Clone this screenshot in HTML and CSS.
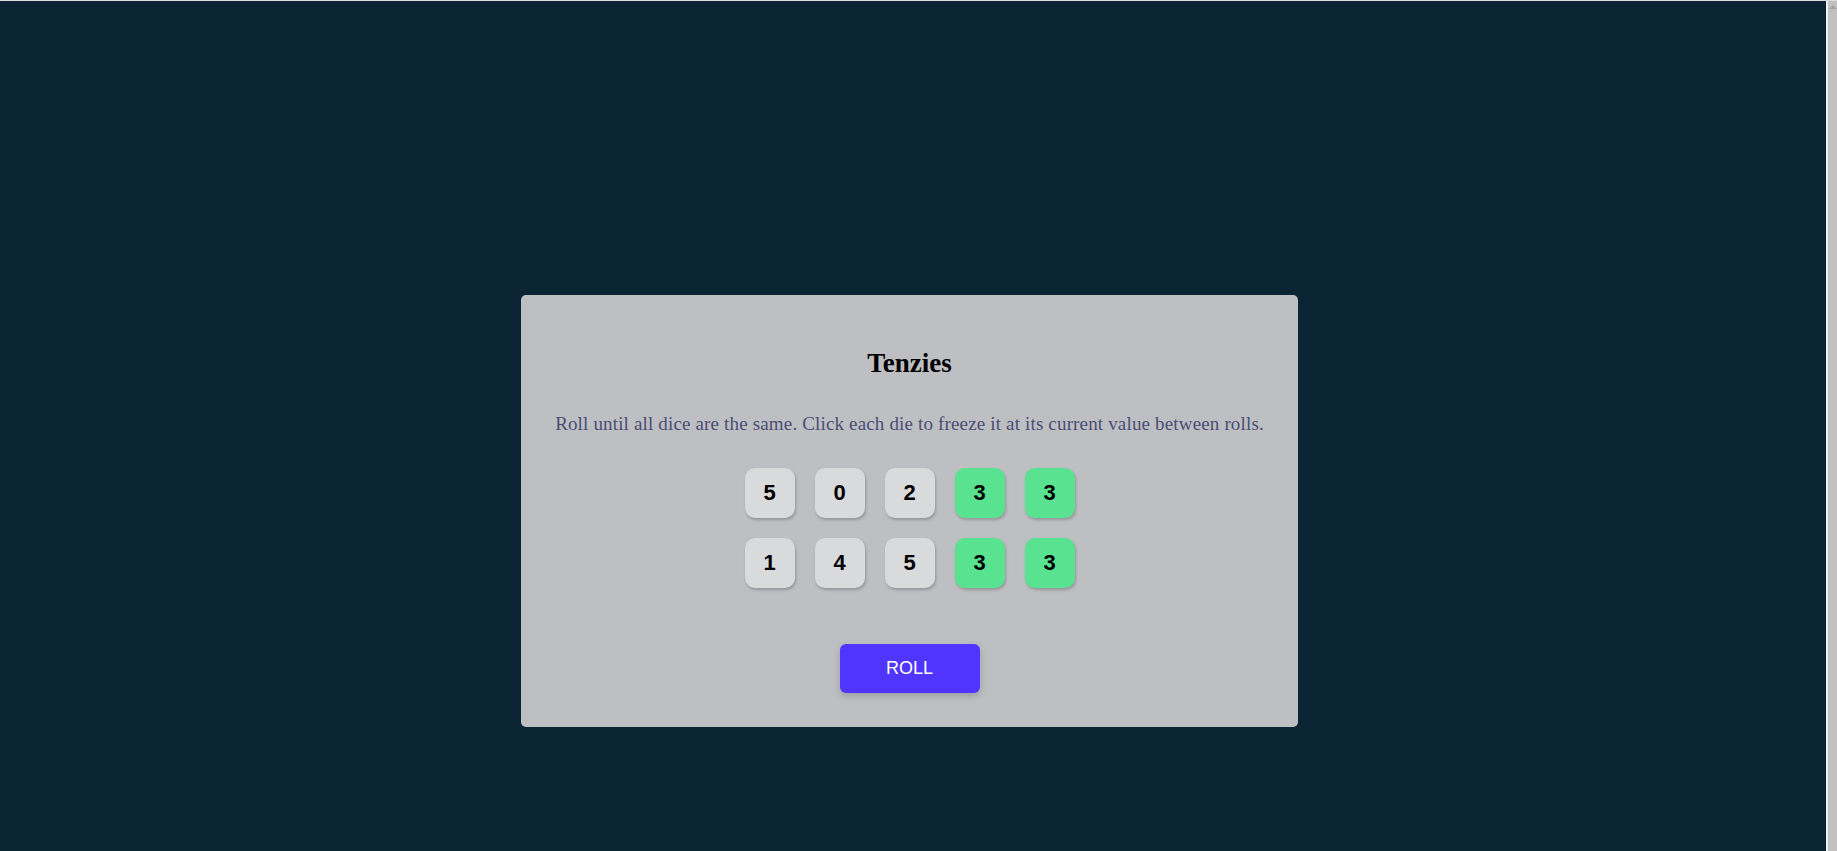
FILE: index.html
```html
<!DOCTYPE html>
<html lang="en">
<head>
<meta charset="utf-8">
<title>Tenzies</title>
<link rel="stylesheet" href="styles.css">
</head>
<body>
<div class="page">
  <div class="stage">
    <main class="card">
      <h1 class="title">Tenzies</h1>
      <p class="instructions">Roll until all dice are the same. Click each die to freeze it at its current value between rolls.</p>
      <div class="dice">
        <button class="die">5</button>
        <button class="die">0</button>
        <button class="die">2</button>
        <button class="die held">3</button>
        <button class="die held">3</button>
        <button class="die">1</button>
        <button class="die">4</button>
        <button class="die">5</button>
        <button class="die held">3</button>
        <button class="die held">3</button>
      </div>
      <button class="roll">ROLL</button>
    </main>
  </div>
  <div class="gutter"><span class="arrow"></span></div>
</div>
</body>
</html>
```
FILE: styles.css
```css
html, body {
  margin: 0;
  padding: 0;
  background: #0B2434;
  overflow: hidden;
}

.page {
  box-sizing: border-box;
  height: 100vh;
  border-top: 1px solid #dcdcdc;
  display: flex;
}

.stage {
  flex: 1;
  padding-top: 294px;
  padding-right: 7px;
  display: flex;
  justify-content: center;
  align-items: flex-start;
}

.gutter {
  width: 9px;
  border-left: 2px solid #f1f1f1;
  background: #c1c1c1;
  display: flex;
  justify-content: center;
  padding-top: 4px;
}

.arrow {
  width: 0;
  height: 0;
  border-left: 4px solid transparent;
  border-right: 4px solid transparent;
  border-bottom: 4px solid #a3a3a3;
}

.card {
  box-sizing: border-box;
  width: 777px;
  height: 432px;
  background: #BEBFC3;
  border-radius: 5px;
  padding-top: 53px;
  display: flex;
  flex-direction: column;
  align-items: center;
}

.title {
  margin: 0;
  font-family: "Liberation Serif", serif;
  font-weight: 700;
  font-size: 27px;
  line-height: 31px;
  color: #000;
}

.instructions {
  margin: 33px 0 0;
  font-family: "Liberation Serif", serif;
  font-size: 19px;
  letter-spacing: 0.16px;
  line-height: 23px;
  color: #4A4E74;
  text-align: center;
}

.dice {
  margin-top: 33px;
  display: grid;
  grid-template-columns: repeat(5, 50px);
  grid-auto-rows: 50px;
  gap: 20px;
}

.die {
  width: 50px;
  height: 50px;
  padding: 0;
  border: none;
  border-radius: 10px;
  background: #D9DADC;
  box-shadow: 1px 2px 3px rgba(0, 0, 0, 0.22);
  font-family: "Liberation Sans", Arial, sans-serif;
  font-weight: 700;
  font-size: 22px;
  color: #000;
  cursor: pointer;
}

.die.held {
  background: #59E391;
}

.roll {
  margin-top: 56px;
  width: 140px;
  height: 49px;
  border: none;
  border-radius: 6px;
  background: #5035FF;
  color: #fff;
  font-family: "Liberation Sans", Arial, sans-serif;
  font-size: 18px;
  box-shadow: 0 3px 7px rgba(0, 0, 0, 0.18);
  cursor: pointer;
}
```
